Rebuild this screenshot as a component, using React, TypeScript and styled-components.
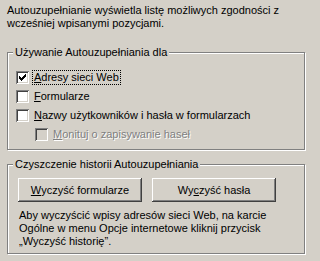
import styled, { createGlobalStyle } from "styled-components";

const GlobalStyle = createGlobalStyle`
  html, body {
    margin: 0;
    padding: 0;
    background: #d4d0c8;
  }
  body {
    font-family: "Liberation Sans", Arial, sans-serif;
    font-size: 11px;
    color: #000;
  }
`;

const Dialog = styled.div`
  width: 312px;
  height: 261px;
  box-sizing: border-box;
  padding: 4px 7px 0 7px;
  background: #d4d0c8;
  line-height: 13px;
`;

const Intro = styled.p`
  margin: 0 0 22px 0;
`;

const Group = styled.div<{ $height: number; $top?: number }>`
  position: relative;
  box-sizing: border-box;
  height: ${(p) => p.$height}px;
  margin-top: ${(p) => p.$top ?? 0}px;
  border: 1px solid #808080;
  box-shadow: inset 1px 1px 0 #fff, 1px 1px 0 #fff;
  padding: 17px 8px 0 8px;
`;

// etykieta ramki nachodzi na górną krawędź
const GroupTitle = styled.span`
  position: absolute;
  top: -7px;
  left: 5px;
  padding: 0 2px;
  background: #d4d0c8;
  white-space: nowrap;
`;

const Rows = styled.div`
  display: flex;
  flex-direction: column;
  gap: 4px;
`;

const Row = styled.label<{ $indent?: boolean }>`
  display: flex;
  align-items: center;
  height: 15px;
  padding-left: ${(p) => (p.$indent ? 19 : 0)}px;
`;

const Box = styled.span<{ $disabled?: boolean }>`
  flex: none;
  width: 13px;
  height: 13px;
  box-sizing: border-box;
  background: ${(p) => (p.$disabled ? "#d4d0c8" : "#fff")};
  box-shadow: inset 1px 1px 0 #808080, inset -1px -1px 0 #fff,
    inset 2px 2px 0 #404040, inset -2px -2px 0 #d4d0c8;
  display: flex;
  align-items: center;
  justify-content: center;
`;

const Label = styled.span<{ $focus?: boolean; $disabled?: boolean }>`
  margin-left: 3px;
  padding: 0 1px;
  line-height: 13px;
  white-space: nowrap;
  border: 1px ${(p) => (p.$focus ? "dotted #000" : "solid transparent")};
  color: ${(p) => (p.$disabled ? "#808080" : "#000")};
  text-shadow: ${(p) => (p.$disabled ? "1px 1px 0 #fff" : "none")};
`;

const Key = styled.span`
  text-decoration: underline;
  text-underline-offset: 1px;
`;

const Buttons = styled.div`
  display: flex;
  gap: 10px;
  padding-left: 2px;
  margin-top: -4px;
`;

const Button = styled.button`
  width: 124px;
  height: 24px;
  padding: 0;
  border: none;
  background: #d4d0c8;
  font: inherit;
  color: #000;
  box-shadow: inset -1px -1px 0 #404040, inset 1px 1px 0 #fff,
    inset -2px -2px 0 #808080, inset 2px 2px 0 #d4d0c8;
`;

const Note = styled.p`
  margin: 7px 0 0 3px;
`;

const Check = () => (
  <svg width="7" height="7" viewBox="0 0 7 7" shapeRendering="crispEdges">
    <path d="M0 2h1v1h1v1h1v-1h1v-1h1v-1h1v-1h1v3h-1v1h-1v1h-1v1h-1v1h-1v-1h-1v-1h-1z" fill="#000" />
  </svg>
);

type Option = {
  key: string;
  rest: string;
  checked?: boolean;
  focus?: boolean;
  disabled?: boolean;
  indent?: boolean;
};

const options: Option[] = [
  { key: "A", rest: "dresy sieci Web", checked: true, focus: true },
  { key: "F", rest: "ormularze" },
  { key: "N", rest: "azwy użytkowników i hasła w formularzach" },
  { key: "M", rest: "onituj o zapisywanie haseł", disabled: true, indent: true },
];

export default function App() {
  return (
    <>
      <GlobalStyle />
      <Dialog>
        <Intro>
          Autouzupełnianie wyświetla listę możliwych zgodności z
          <br />
          wcześniej wpisanymi pozycjami.
        </Intro>

        <Group $height={98}>
          <GroupTitle>Używanie Autouzupełniania dla</GroupTitle>
          <Rows>
            {options.map((o) => (
              <Row key={o.key} $indent={o.indent}>
                <Box $disabled={o.disabled}>{o.checked && <Check />}</Box>
                <Label $focus={o.focus} $disabled={o.disabled}>
                  <Key>{o.key}</Key>
                  {o.rest}
                </Label>
              </Row>
            ))}
          </Rows>
        </Group>

        <Group $height={90} $top={14}>
          <GroupTitle>Czyszczenie historii Autouzupełniania</GroupTitle>
          <Buttons>
            <Button>
              <Key>W</Key>yczyść formularze
            </Button>
            <Button>
              Wy<Key>c</Key>zyść hasła
            </Button>
          </Buttons>
          <Note>
            Aby wyczyścić wpisy adresów sieci Web, na karcie
            <br />
            Ogólne w menu Opcje internetowe kliknij przycisk
            <br />
            „Wyczyść historię”.
          </Note>
        </Group>
      </Dialog>
    </>
  );
}
